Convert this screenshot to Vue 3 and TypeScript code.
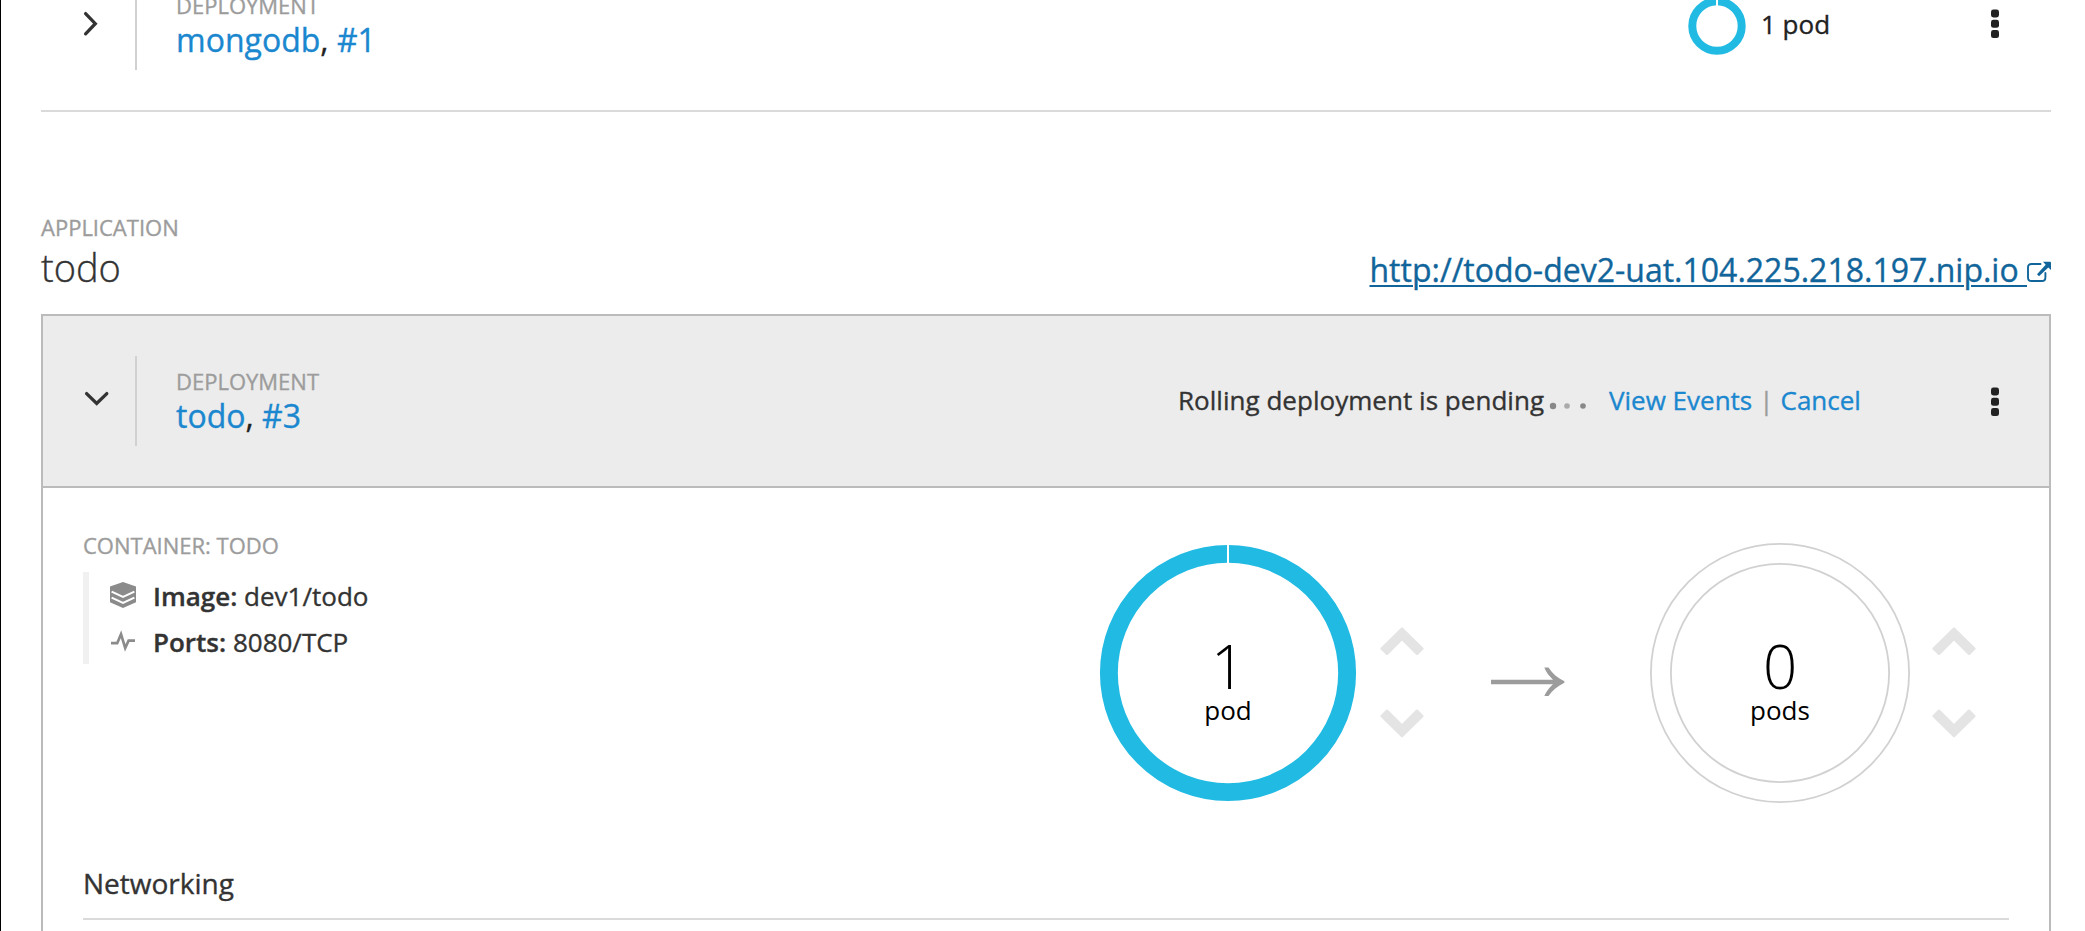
<script setup lang="ts">
interface Donut {
  count: number
  label: string
  filled: boolean
}

const donuts: Donut[] = [
  { count: 1, label: 'pod', filled: true },
  { count: 0, label: 'pods', filled: false },
]
</script>

<template>
  <main class="page">
    <section class="row row-collapsed">
      <div class="toggle">
        <svg class="icon-right" width="16" height="26" viewBox="0 0 16 26">
          <path d="M2.6 2.6 L12.3 12.7 L2.6 22.8" fill="none" stroke="#333" stroke-width="3.3" stroke-linecap="round" />
        </svg>
      </div>
      <div class="title">
        <div class="label">DEPLOYMENT</div>
        <div class="name"><a>mongodb</a>, <a>#1</a></div>
      </div>
      <div class="summary">
        <svg width="58" height="58" viewBox="0 0 58 58">
          <circle cx="29" cy="29" r="24.7" fill="none" stroke="#20bae3" stroke-width="8" />
          <rect x="28" y="0" width="2" height="10" fill="#fff" />
        </svg>
        <span>1 pod</span>
      </div>
      <svg class="kebab" width="9" height="30" viewBox="0 0 9 30">
        <rect v-for="i in 3" :key="i" x="0" :y="(i - 1) * 10.3 + 0.5" width="8" height="8" rx="2.4" fill="#222" />
      </svg>
    </section>

    <section class="app-head">
      <div>
        <div class="label app-label">APPLICATION</div>
        <h2>todo</h2>
      </div>
      <div class="route">
        <a>http://todo-dev2-uat.104.225.218.197.nip.io&nbsp;</a>
        <svg width="24" height="22" viewBox="0 0 24 22">
          <path d="M13.5 3 H4.6 Q1 3 1 6.6 V16.4 Q1 20 4.6 20 H14.8 Q18.4 20 18.4 16.4 V12" fill="none" stroke="#11659b" stroke-width="1.9" stroke-linecap="round" />
          <path d="M16 .7 H23 Q24 .7 24 1.7 V9 L21.3 6.4 L12 15.3 L10 13.3 L18.7 3.7 Z" fill="#11659b" />
        </svg>
      </div>
    </section>

    <section class="panel">
      <header class="row row-open">
        <div class="toggle">
          <svg class="icon-down" width="26" height="16" viewBox="0 0 26 16">
            <path d="M2.6 2.6 L12.7 12.5 L22.8 2.6" fill="none" stroke="#333" stroke-width="3.3" stroke-linecap="round" />
          </svg>
        </div>
        <div class="title">
          <div class="label">DEPLOYMENT</div>
          <div class="name"><a>todo</a>, <a>#3</a></div>
        </div>
        <div class="status">
          <span class="message">Rolling deployment is pending</span>
          <svg width="38" height="10" viewBox="0 0 38 10">
            <circle cx="5" cy="5" r="3.2" fill="#888" />
            <circle cx="19" cy="5" r="2.8" fill="#aaa" />
            <circle cx="35" cy="5" r="2.8" fill="#888" />
          </svg>
          <a>View Events</a><span class="bar">|</span><a>Cancel</a>
        </div>
        <svg class="kebab" width="9" height="30" viewBox="0 0 9 30">
          <rect v-for="i in 3" :key="i" x="0" :y="(i - 1) * 10.3 + 0.5" width="8" height="8" rx="2.4" fill="#222" />
        </svg>
      </header>

      <div class="body">
        <div class="container-info">
          <div class="label">CONTAINER: TODO</div>
          <ul>
            <li>
              <svg width="26" height="26" viewBox="0 0 26 26">
                <path d="M13 0 L26 4.4 V20.2 L13 26 L0 20.2 V4.4 Z" fill="#8b8b8b" />
                <path d="M1.6 9.6 L13 14.9 L24.4 9.6 M1.6 15.6 L13 20.9 L24.4 15.6" fill="none" stroke="#fff" stroke-width="2" />
              </svg>
              <span><b>Image:</b> dev1/todo</span>
            </li>
            <li>
              <svg width="26" height="26" viewBox="0 0 26 26">
                <path d="M1 15.2 H7.2 L11 6.2 L15.2 20 L18.6 12.6 H25" fill="none" stroke="#8b8b8b" stroke-width="2.7" />
              </svg>
              <span><b>Ports:</b> 8080/TCP</span>
            </li>
          </ul>
        </div>

        <div class="donuts">
          <template v-for="(d, i) in donuts" :key="i">
            <svg v-if="i > 0" class="arrow" width="74" height="30" viewBox="0 0 74 30">
              <path d="M0 12.7 H62 C58 9 55 5 53.3 .5 H57.5 C61.5 6.5 66.5 11 73.4 14.2 V15.8 C66.5 19 61.5 23.5 57.5 29 H53.3 C55 25 58 21 62 17.3 H0 Z" fill="#9c9c9c" />
            </svg>
            <svg width="260" height="260" viewBox="0 0 260 260">
              <template v-if="d.filled">
                <circle cx="130" cy="130" r="119.1" fill="none" stroke="#20bae3" stroke-width="17.9" />
                <rect x="129" y="0" width="2" height="22" fill="#fff" />
              </template>
              <template v-else>
                <circle cx="130" cy="130" r="129.1" fill="none" stroke="#d1d1d1" stroke-width="1.8" />
                <circle cx="130" cy="130" r="109.1" fill="none" stroke="#d1d1d1" stroke-width="1.8" />
              </template>
              <text class="count" x="130" y="146">{{ d.count }}</text>
              <text class="unit" x="130" y="177">{{ d.label }}</text>
            </svg>
            <div class="scalers">
              <svg width="44" height="29" viewBox="0 0 44 29">
                <path d="M22 1.5 L42.4 21.6 L37 27 L22 12 L7 27 L1.6 21.6 Z" fill="#e4e4e4" stroke="#e4e4e4" stroke-width="2.4" stroke-linejoin="round" />
              </svg>
              <svg width="44" height="29" viewBox="0 0 44 29">
                <path d="M22 27.2 L42.4 7.1 L37 1.7 L22 16.7 L7 1.7 L1.6 7.1 Z" fill="#e4e4e4" stroke="#e4e4e4" stroke-width="2.4" stroke-linejoin="round" />
              </svg>
            </div>
          </template>
        </div>
      </div>

      <h3>Networking</h3>
    </section>
  </main>
</template>

<style>
body {
  margin: 0;
  background: #fff;
  overflow: hidden;
}
</style>

<style scoped>
.page {
  box-sizing: border-box;
  height: 931px;
  overflow: hidden;
  border-left: 1px solid #000;
  padding: 0 34px 0 40px;
  background: #fff;
  color: #333;
  font: 26px/40px "Open Sans", sans-serif;
  -webkit-text-stroke: 0.35px currentColor;
}
a {
  color: #1a87cf;
}
svg {
  display: block;
  flex: none;
}
.label {
  color: #9c9c9c;
  font-size: 22px;
  line-height: 30px;
}
.row {
  box-sizing: border-box;
  display: flex;
  align-items: flex-start;
}
.row-collapsed {
  height: 132px;
  margin-top: -20px;
  padding: 0 51px 0 0;
  border-bottom: 2px solid #dadada;
}
.row-open {
  height: 172px;
  padding: 40px 49px 0 0;
  background: #ececec;
  border-bottom: 2px solid #bbb;
}
.toggle {
  box-sizing: border-box;
  width: 96px;
  height: 90px;
  border-right: 2px solid #d1d1d1;
}
.row-open .toggle {
  width: 94px;
}
.icon-right {
  margin: 31px 0 0 42px;
}
.icon-down {
  margin: 35px 0 0 41px;
}
.title {
  flex: 1;
  margin: 10px 0 0 39px;
}
.name {
  font-size: 32px;
  line-height: 39px;
  color: #222;
}
.summary {
  display: flex;
  align-items: center;
  gap: 15px;
  margin-top: 17px;
  width: 303px;
  color: #222;
}
.summary span {
  margin-top: -4px;
}
.kebab {
  margin-top: 29px;
}
.row-open .kebab {
  margin-top: 31px;
}
.app-head {
  box-sizing: border-box;
  display: flex;
  justify-content: space-between;
  align-items: flex-start;
  height: 202px;
  padding-top: 100px;
}
.app-label {
  line-height: 30px;
}
h2 {
  margin: 2px 0 0;
  font-size: 38px;
  font-weight: 300;
  line-height: 46px;
}
.route {
  display: flex;
  margin-top: 36px;
  font-size: 32px;
  line-height: 44px;
}
.route a {
  color: #11659b;
  text-decoration: underline;
  text-decoration-thickness: 2px;
  text-underline-offset: 3px;
}
.route svg {
  margin-top: 13px;
}
.panel {
  height: 700px;
  border: 2px solid #bbb;
}
.status {
  display: flex;
  align-items: center;
  width: 813px;
  margin-top: 24px;
}
.message {
  letter-spacing: 0.03px;
}
.status svg {
  margin: 12px 23px 0 4px;
}
.bar {
  margin: 0 7px;
  color: #9c9c9c;
}
.body {
  display: flex;
  justify-content: space-between;
  height: 370px;
  padding: 0 73px 0 40px;
}
.container-info {
  padding-top: 42px;
}
ul {
  margin: 12px 0 0;
  padding: 0 0 0 21px;
  border-left: 6px solid #f1f1f1;
  list-style: none;
}
li {
  display: flex;
  align-items: flex-start;
  height: 46px;
  line-height: 48px;
}
li svg {
  margin: 10px 17px 0 0;
}
b {
  font-weight: 600;
}
.donuts {
  display: flex;
  align-items: flex-start;
  padding-top: 55px;
}
.scalers {
  display: grid;
  gap: 53px;
  margin: 84px 0 0 22px;
}
.arrow {
  margin: 124px 85px 0 67px;
}
.count {
  font-size: 60px;
  font-weight: 300;
  text-anchor: middle;
  fill: #000;
}
.unit {
  font-size: 26px;
  text-anchor: middle;
  fill: #000;
}
h3 {
  margin: 0 40px;
  padding: 3px 0 13px;
  border-bottom: 2px solid #dadada;
  font-size: 28px;
  font-weight: 400;
  line-height: 44px;
}
</style>
